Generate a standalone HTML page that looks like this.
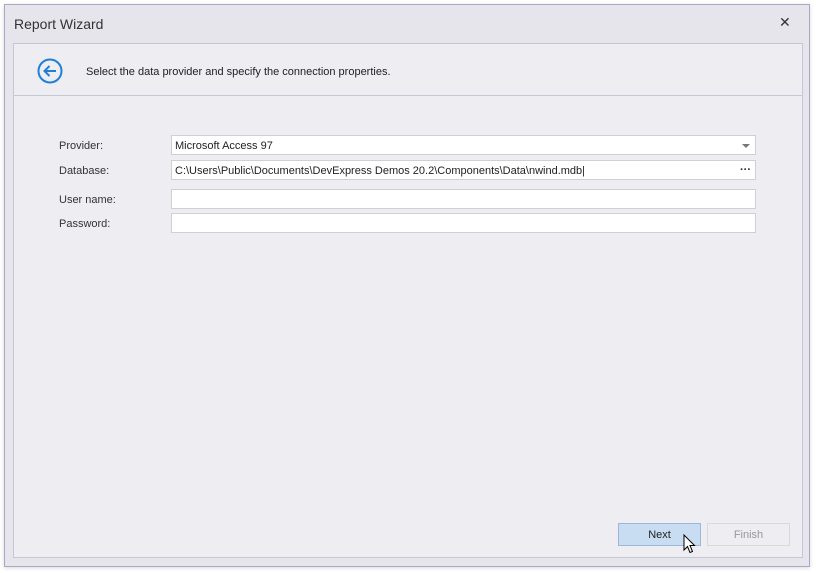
<!DOCTYPE html>
<html><head><style>
body{margin:0;width:816px;height:573px;background:#fff;font-family:"Liberation Sans",sans-serif;position:relative;overflow:hidden}
.win{position:absolute;left:4px;top:4px;width:804px;height:561px;background:#e5e5eb;border:1px solid #a9a9c4;box-shadow:0 1px 4px rgba(0,0,0,.15)}
.a{position:absolute}
.panel{left:13px;top:43px;width:788px;height:513px;background:#ededf2;border:1px solid #c6c6d4}
.lbl{left:59px;font-size:11px;color:#333}
.fld{left:171px;width:580px;height:18px;background:#fff;border:1px solid #cfcfd8;font-size:11px;color:#222;line-height:20px;padding-left:3px;box-sizing:content-box}
.btn{width:81px;height:21px;font-size:11px;text-align:center;line-height:23px}
</style></head><body>
<div class="win"></div>
<div class="a" style="left:14px;top:16px;font-size:14px;color:#333">Report Wizard</div>
<div class="a" style="left:779px;top:14px;font-size:14px;color:#333">✕</div>
<div class="a panel"></div>
<div class="a" style="left:14px;top:95px;width:788px;height:1px;background:#c6c6d4"></div>
<svg class="a" style="left:36px;top:57px" width="28" height="28" viewBox="0 0 28 28"><circle cx="14" cy="14" r="11.5" fill="none" stroke="#1e7fd6" stroke-width="2"/><path d="M20 14H8.5M13.5 9L8.5 14L13.5 19" fill="none" stroke="#1e7fd6" stroke-width="2"/></svg>
<div class="a" style="left:86px;top:66px;font-size:11px;color:#222">Select the data provider and specify the connection properties.</div>
<div class="a lbl" style="top:140px">Provider:</div>
<div class="a lbl" style="top:165px">Database:</div>
<div class="a lbl" style="top:194px">User name:</div>
<div class="a lbl" style="top:218px">Password:</div>
<div class="a fld" style="top:135px">Microsoft Access 97<span style="position:absolute;right:5px;top:8px;border:4px solid transparent;border-top:4px solid #777;border-bottom:0"></span></div>
<div class="a fld" style="top:160px">C:\Users\Public\Documents\DevExpress Demos 20.2\Components\Data\nwind.mdb|<span style="position:absolute;right:4px;top:-1px;font-weight:bold">···</span></div>
<div class="a fld" style="top:189px"></div>
<div class="a fld" style="top:213px"></div>
<div class="a btn" style="left:618px;top:523px;background:#c8dcf2;border:1px solid #9bb8dc;color:#222">Next</div>
<div class="a btn" style="left:707px;top:523px;background:#ededf2;border:1px solid #d8d8e0;color:#999">Finish</div>
<svg class="a" style="left:683px;top:534px" width="13" height="20" viewBox="0 0 13 20"><path d="M1 1V16L4.5 12.5L7 18.5L9.5 17.5L7 11.5H11.5Z" fill="#fff" stroke="#000" stroke-width="1"/></svg>
</body></html>
